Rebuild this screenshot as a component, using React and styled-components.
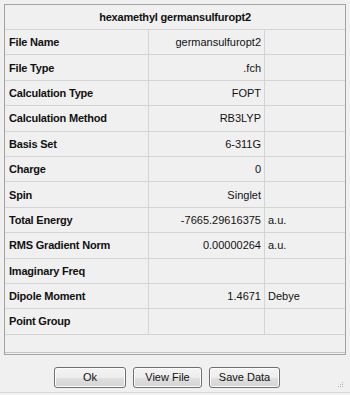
import React from 'react'
import styled, { createGlobalStyle } from 'styled-components'

const rows = [
  { label: 'File Name', value: 'germansulfuropt2' },
  { label: 'File Type', value: '.fch' },
  { label: 'Calculation Type', value: 'FOPT' },
  { label: 'Calculation Method', value: 'RB3LYP' },
  { label: 'Basis Set', value: '6-311G' },
  { label: 'Charge', value: '0' },
  { label: 'Spin', value: 'Singlet' },
  { label: 'Total Energy', value: '-7665.29616375', unit: 'a.u.' },
  { label: 'RMS Gradient Norm', value: '0.00000264', unit: 'a.u.' },
  { label: 'Imaginary Freq', value: '' },
  { label: 'Dipole Moment', value: '1.4671', unit: 'Debye' },
  { label: 'Point Group', value: '' }
]

const App = () => {
  return (
    <>
      <GlobalStyle />
      <Window>
        <Frame>
          <Title>hexamethyl germansulfuropt2</Title>
          {rows.map(row => (
            <Row key={row.label}>
              <Label>{row.label}</Label>
              <Value>{row.value}</Value>
              <Unit>{row.unit}</Unit>
            </Row>
          ))}
          <Filler />
        </Frame>

        <Footer>
          <Button width={72}>Ok</Button>
          <Button width={69}>View File</Button>
          <Button width={71}>Save Data</Button>
          <Grip width="6" height="6" viewBox="0 0 6 6">
            <rect x="4" y="0" width="1" height="1" fill="#b5b5b5" />
            <rect x="2" y="2" width="1" height="1" fill="#b5b5b5" />
            <rect x="4" y="2" width="1" height="1" fill="#b5b5b5" />
            <rect x="0" y="4" width="1" height="1" fill="#b5b5b5" />
            <rect x="2" y="4" width="1" height="1" fill="#b5b5b5" />
            <rect x="4" y="4" width="1" height="1" fill="#b5b5b5" />
          </Grip>
        </Footer>
      </Window>
    </>
  )
}

export default App

const GlobalStyle = createGlobalStyle`
  body {
    margin: 0;
    background: #f0f0f0;
    font-family: 'Liberation Sans', Arial, sans-serif;
  }
`

const Window = styled.div`
  width: 350px;
  height: 395px;
  box-sizing: border-box;
  padding: 4px 4px 0 4px;
  background: #f0f0f0;
  display: flex;
  flex-direction: column;
`

const Frame = styled.div`
  border: 1px solid #a3a3a3;
  background: #f0f0f0;
  display: flex;
  flex-direction: column;
`

const Title = styled.div`
  height: 24px;
  border-bottom: 1px solid #d4d4d4;
  display: flex;
  align-items: center;
  justify-content: center;
  font-size: 11px;
  font-weight: bold;
  letter-spacing: -0.2px;
  color: #111;
`

const Row = styled.div`
  display: grid;
  grid-template-columns: 144px 116px 1fr;
  height: 24.4px;
  border-bottom: 1px solid #d4d4d4;
`

const Cell = styled.div`
  display: flex;
  align-items: center;
  font-size: 11px;
  color: #111;
  white-space: nowrap;
`

const Label = styled(Cell)`
  padding-left: 4px;
  font-weight: bold;
  letter-spacing: -0.2px;
  border-right: 1px solid #d4d4d4;
`

const Value = styled(Cell)`
  justify-content: flex-end;
  padding-right: 3px;
  border-right: 1px solid #d4d4d4;
`

const Unit = styled(Cell)`
  padding-left: 3px;
`

const Filler = styled.div`
  height: 17px;
  border-bottom: 1px solid #c4c4c4;
  margin-bottom: 1px;
`

const Footer = styled.div`
  position: relative;
  flex: 1;
  display: flex;
  align-items: flex-start;
  gap: 7px;
  padding: 12px 0 0 54px;
  margin: 0 -4px 2px;
  border-bottom: 1px solid #d8d8d8;
`

const Button = styled.button`
  width: ${props => props.width}px;
  height: 21px;
  padding: 0;
  border: 1px solid #707070;
  border-radius: 3px;
  background: linear-gradient(#f4f4f4 0%, #ededed 50%, #e0e0e0 51%, #d4d4d4 100%);
  box-shadow: inset 0 0 0 1px #fcfcfc;
  font-family: 'Liberation Sans', Arial, sans-serif;
  font-size: 11px;
  color: #111;
`

const Grip = styled.svg`
  position: absolute;
  right: 6px;
  bottom: 4px;
`
